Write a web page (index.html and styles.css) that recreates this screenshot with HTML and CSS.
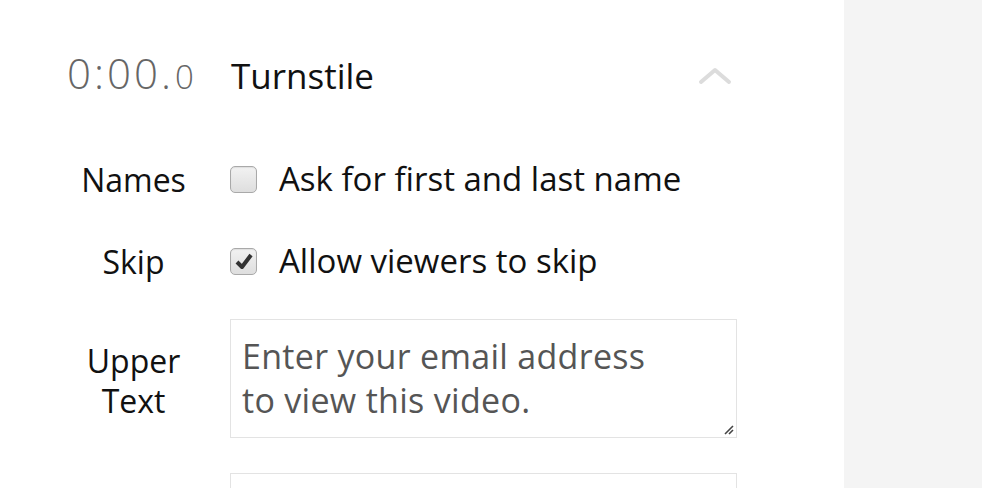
FILE: index.html
```html
<!DOCTYPE html>
<html>
<head>
<meta charset="utf-8">
<link rel="stylesheet" href="styles.css">
</head>
<body>
<div class="page">
  <main class="editor">
    <header class="head">
      <div class="timer">0:00.<span class="tenths">0</span></div>
      <div class="title">Turnstile</div>
      <svg class="chev" width="36" height="20" viewBox="0 0 36 20"><path d="M4 16 L18 4 L32 16" fill="none" stroke="#dcdcdc" stroke-width="4" stroke-linecap="round" stroke-linejoin="round"/></svg>
    </header>
    <div class="row r1">
      <div class="label">Names</div>
      <label class="field check"><span class="box"></span>Ask for first and last name</label>
    </div>
    <div class="row r2">
      <div class="label">Skip</div>
      <label class="field check"><span class="box checked"><svg width="20" height="18" viewBox="0 0 20 18"><path d="M3 10 L8 15 L17 3" fill="none" stroke="#333" stroke-width="4" stroke-linejoin="round"/></svg></span>Allow viewers to skip</label>
    </div>
    <div class="row top r3">
      <div class="label multi">Upper<br>Text</div>
      <div class="field">
        <div class="textarea">Enter your email address<br>to view this video.<svg class="grip" width="12" height="12" viewBox="0 0 12 12"><path d="M11 3 L3 11 M11 7 L7 11" stroke="#444" stroke-width="1.6"/></svg></div>
      </div>
    </div>
    <div class="row top r4">
      <div class="label"></div>
      <div class="field"><div class="textarea"></div></div>
    </div>
  </main>
  <aside class="side"></aside>
</div>
</body>
</html>
```
FILE: styles.css
```css
html, body { margin: 0; padding: 0; background: #fff; }
body { font-family: "Open Sans", sans-serif; color: #111; overflow: hidden; height: 488px; }
.page { display: flex; height: 488px; }
.editor { width: 844px; flex: none; padding: 0 0 0 67px; box-sizing: border-box; }
.side { flex: 1; background: #f4f4f4; }
.head { display: flex; align-items: center; height: 64px; margin-top: 43px; }
.timer { width: 164px; font-size: 42px; font-weight: 300; color: #666; letter-spacing: 3px; line-height: 64px; }
.tenths { font-size: 33px; margin-left: 1px; letter-spacing: 0; }
.title { font-size: 35px; width: 466px; }
.chev { margin-top: 2px; }
.row { display: flex; align-items: center; }
.r1 { margin-top: 50px; }
.r2 { margin-top: 38px; }
.r3 { margin-top: 36px; }
.r4 { margin-top: 35px; }
.row.top { align-items: flex-start; }
.label { width: 133px; text-align: center; font-size: 32px; margin-right: 30px; }
.label.multi { line-height: 40px; margin-top: 22px; }
.field { width: 507px; font-size: 33px; }
.check { display: flex; align-items: center; line-height: 44px; }
.box { width: 25px; height: 25px; border: 1px solid #a9a9a9; border-radius: 5px; background: linear-gradient(#f2f2f2, #dedede); margin-right: 22px; display: flex; align-items: center; justify-content: center; box-shadow: inset 0 1px 1px rgba(0,0,0,.08); flex: none; }
.textarea { position: relative; border: 1px solid #e3e3e3; box-sizing: border-box; height: 119px; padding: 14px 11px; color: #555; font-size: 34px; line-height: 44px; letter-spacing: 0.3px; }
.grip { position: absolute; right: 2px; bottom: 2px; }
```
